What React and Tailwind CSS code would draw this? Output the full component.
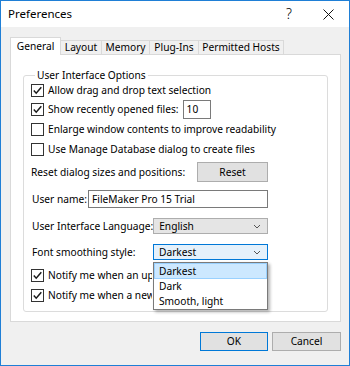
import React from "react";

function Check({ checked }) {
  return (
    <span className="w-[13px] h-[13px] border border-[#333] bg-white flex items-center justify-center shrink-0">
      {checked && (
        <svg width="11" height="11" viewBox="0 0 11 11">
          <path d="M1.8 5.6 L4.2 8.2 L9.3 2.2" stroke="#1a1a1a" strokeWidth="1.5" fill="none" />
        </svg>
      )}
    </span>
  );
}

function CheckRow({ checked, h, children }) {
  return (
    <div className={`flex items-center gap-[4px] ${h}`}>
      <Check checked={checked} />
      <span className="whitespace-nowrap">{children}</span>
    </div>
  );
}

function Chevron() {
  return (
    <svg width="8" height="5" viewBox="0 0 8 5">
      <path d="M1 1 L4 4 L7 1" stroke="#555" strokeWidth="1" fill="none" />
    </svg>
  );
}

export default function App() {
  const tabs = [
    { name: "Layout", w: "w-[41px]" },
    { name: "Memory", w: "w-[48px]" },
    { name: "Plug-Ins", w: "w-[49px]" },
    { name: "Permitted Hosts", w: "w-[85px]" },
  ];

  return (
    <div className="w-[350px] h-[366px] border border-[#1f7fd6] bg-[#f0f0f0] flex flex-col text-[10.2px] text-black font-['Noto_Sans',sans-serif] leading-none overflow-hidden">
      {/* title bar */}
      <div className="h-[26px] bg-white flex items-center pl-[7px] shrink-0">
        <span className="text-[11.5px]">Preferences</span>
        <span className="ml-auto text-[14px] font-light mr-[31px]">?</span>
        <svg width="11" height="11" viewBox="0 0 11 11" className="mr-[15px]">
          <path d="M0.5 0.5 L10.5 10.5 M10.5 0.5 L0.5 10.5" stroke="#111" strokeWidth="1" />
        </svg>
      </div>

      {/* tabs */}
      <div className="pt-[10px] pl-[9px] flex items-end h-[27px] shrink-0">
        <div className="w-[51px] h-[18px] -mb-px relative z-10 bg-white border border-b-0 border-[#d9d9d9] flex items-center justify-center">
          General
        </div>
        {tabs.map((t) => (
          <div
            key={t.name}
            className={`${t.w} h-[14px] border-t border-r border-[#d9d9d9] bg-[#f0f0f0] flex items-center justify-center whitespace-nowrap`}
          >
            {t.name}
          </div>
        ))}
      </div>

      {/* panel */}
      <div className="ml-[9px] w-[331px] h-[268px] bg-white border border-[#d9d9d9] shrink-0">
        <fieldset className="mt-[14px] mx-[12px] border border-[#dcdcdc] rounded-[3px] pl-[7px] pb-[6px]">
          <legend className="ml-[4px] px-[2px] leading-[12px]">User Interface Options</legend>
          <CheckRow checked h="h-[18px]">Allow drag and drop text selection</CheckRow>
          <div className="flex items-center gap-[4px] h-[20px]">
            <Check checked />
            <span className="whitespace-nowrap">Show recently opened files:</span>
            <div className="w-[28px] h-[19px] border border-[#7a7a7a] flex items-center pl-[3px]">10</div>
          </div>
          <CheckRow h="h-[20px]">Enlarge window contents to improve readability</CheckRow>
          <CheckRow h="h-[20px]">Use Manage Database dialog to create files</CheckRow>

          <div className="mt-[3px] h-[20px] w-[237px] flex items-center justify-between">
            <span className="whitespace-nowrap">Reset dialog sizes and positions:</span>
            <div className="w-[71px] h-[20px] shrink-0 bg-[#e1e1e1] border border-[#adadad] flex items-center justify-center">Reset</div>
          </div>

          <div className="mt-[8px] h-[18px] w-[237px] flex items-center justify-between">
            <span className="pl-[1px] whitespace-nowrap">User name:</span>
            <div className="w-[180px] h-[18px] shrink-0 border border-[#7a7a7a] flex items-center pl-[3px] whitespace-nowrap">FileMaker Pro 15 Trial</div>
          </div>

          <div className="mt-[10px] h-[16px] w-[237px] flex items-center justify-between">
            <span className="pl-[1px] whitespace-nowrap">User Interface Language:</span>
            <div className="w-[115px] h-[16px] shrink-0 bg-[#e5e5e5] border border-[#adadad] flex items-center pl-[5px] pr-[6px]">
              <span>English</span>
              <span className="ml-auto"><Chevron /></span>
            </div>
          </div>

          <div className="mt-[10px] h-[16px] w-[237px] flex items-center justify-between relative z-20">
            <span className="pl-[1px] whitespace-nowrap">Font smoothing style:</span>
            <div className="w-[115px] h-[16px] shrink-0 bg-[#e5f1fb] border border-[#0078d7] flex items-center pl-[5px] pr-[6px] relative">
              <span>Darkest</span>
              <span className="ml-auto"><Chevron /></span>
              <div className="absolute top-[17px] -left-px w-[115px] h-[48px] bg-white border border-[#7a7a7a] shadow-[2px_2px_3px_rgba(0,0,0,0.3)] flex flex-col">
                <div className="h-[16px] bg-[#cce8ff] border border-[#99d1ff] flex items-center pl-[4px]">Darkest</div>
                <div className="h-[15px] flex items-center pl-[5px]">Dark</div>
                <div className="h-[15px] flex items-center pl-[5px]">Smooth, light</div>
              </div>
            </div>
          </div>

          {/* only the part left of the open list is visible */}
          <div className="mt-[5px] w-[121px] overflow-hidden">
            <CheckRow checked h="h-[20px]">Notify me when an up</CheckRow>
            <CheckRow checked h="h-[20px]">Notify me when a new</CheckRow>
          </div>
        </fieldset>
      </div>

      {/* buttons */}
      <div className="mt-[10px] flex justify-end gap-[4px] pr-[8px]">
        <div className="w-[68px] h-[19px] bg-[#e1e1e1] border border-[#0078d7] flex items-center justify-center">OK</div>
        <div className="w-[69px] h-[19px] bg-[#e1e1e1] border border-[#adadad] flex items-center justify-center">Cancel</div>
      </div>
    </div>
  );
}
